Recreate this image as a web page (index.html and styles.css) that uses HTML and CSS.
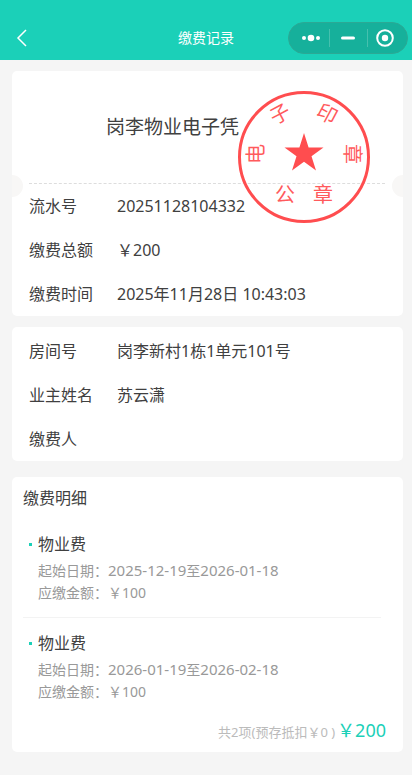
FILE: index.html
```html
<!DOCTYPE html>
<html lang="zh-CN">
<head>
    <meta charset="UTF-8">
    <meta name="viewport" content="width=device-width, initial-scale=1.0">
    <title>缴费记录</title>
    <link rel="stylesheet" href="styles.css">
</head>
<body>

<header class="navbar">
    <button class="back" type="button" aria-label="返回">
        <svg width="12" height="18" viewBox="0 0 12 18"><path d="M10 1 L2 9 L10 17" fill="none" stroke="#fff" stroke-width="1.5"/></svg>
    </button>
    <h1>缴费记录</h1>
    <div class="capsule">
        <button type="button" aria-label="更多">
            <svg width="20" height="8" viewBox="0 0 20 8" fill="#fff"><circle cx="3" cy="4" r="2"/><circle cx="10" cy="4" r="3.3"/><circle cx="17" cy="4" r="2"/></svg>
        </button>
        <button type="button" aria-label="最小化">
            <svg width="14" height="4" viewBox="0 0 14 4"><rect y="0.5" width="14" height="3" rx="1.5" fill="#fff"/></svg>
        </button>
        <button type="button" aria-label="关闭">
            <svg width="18" height="18" viewBox="0 0 18 18"><circle cx="9" cy="9" r="7.8" fill="none" stroke="#fff" stroke-width="2"/><circle cx="9" cy="9" r="3.2" fill="#fff"/></svg>
        </button>
    </div>
</header>

<main>
    <section class="card receipt">
        <h2 class="receipt-title">岗李物业电子凭</h2>
        <div class="tear"></div>
        <dl class="rows">
            <div class="row"><dt>流水号</dt><dd>20251128104332</dd></div>
            <div class="row"><dt>缴费总额</dt><dd>￥200</dd></div>
            <div class="row"><dt>缴费时间</dt><dd>2025年11月28日 10:43:03</dd></div>
        </dl>
        <!-- 电子印章 -->
        <svg class="seal" viewBox="0 0 132 132">
            <circle cx="66" cy="66" r="64.5" fill="none" stroke="#ff4d4f" stroke-width="3"/>
            <polygon points="66,42 70.6,56.4 85.5,56.4 73.5,65.2 78,79.5 66,70.8 54,79.5 58.5,65.2 46.5,56.4 61.4,56.4" fill="#ff4d4f"/>
            <text transform="translate(18 63) rotate(-90)" dy="7">电</text>
            <text transform="translate(42 23) rotate(-28)" dy="7">子</text>
            <text transform="translate(89 23) rotate(28)" dy="7">印</text>
            <text transform="translate(114 63) rotate(90)" dy="7">章</text>
            <text x="47" y="111">公</text>
            <text x="85" y="111">章</text>
        </svg>
    </section>

    <section class="card owner">
        <dl class="rows">
            <div class="row"><dt>房间号</dt><dd>岗李新村1栋1单元101号</dd></div>
            <div class="row"><dt>业主姓名</dt><dd>苏云潇</dd></div>
            <div class="row"><dt>缴费人</dt><dd></dd></div>
        </dl>
    </section>

    <section class="card detail">
        <h2>缴费明细</h2>
        <ul>
            <li>
                <h3>物业费</h3>
                <p>起始日期：<time>2025-12-19</time>至<time>2026-01-18</time></p>
                <p>应缴金额：￥100</p>
            </li>
            <li>
                <h3>物业费</h3>
                <p>起始日期：<time>2026-01-19</time>至<time>2026-02-18</time></p>
                <p>应缴金额：￥100</p>
            </li>
        </ul>
        <div class="total">
            <span class="count">共2项(预存抵扣￥0 )</span>
            <span class="sum">￥200</span>
        </div>
    </section>
</main>

</body>
</html>
```
FILE: styles.css
```css
* {
    box-sizing: border-box;
}
body {
    margin: 0;
    background-color: #f5f5f5;
    font-family: "Noto Sans", "Noto Sans CJK SC", sans-serif;
    font-size: 16px;
    font-weight: 390;
    color: #404040;
}
h1, h2, h3, p, ul, dl, dd {
    margin: 0;
    padding: 0;
    font-weight: inherit;
}
button {
    border: none;
    background: none;
    padding: 0;
    display: flex;
    align-items: center;
    justify-content: center;
    cursor: pointer;
}

/* 顶部导航 */
.navbar {
    display: grid;
    grid-template-columns: 120px 1fr 120px;
    align-items: center;
    height: 60px;
    padding: 16px 4px 0;
    background-color: #1bd0b8;
    color: #fff;
}
.navbar h1 {
    font-size: 14px;
    line-height: 20px;
    text-align: center;
}
.back {
    width: 36px;
    height: 32px;
}
.capsule {
    display: flex;
    height: 32px;
    padding: 0 3px;
    border: 1px solid #2ba995;
    border-radius: 16px;
    background-color: #16b09b;
}
.capsule button {
    flex: 1;
    position: relative;
}
.capsule button + button::before {
    content: "";
    position: absolute;
    left: 0;
    top: 6px;
    width: 1px;
    height: 18px;
    background-color: #46c0ae;
}

/* 卡片 */
.card {
    position: relative;
    margin: 11px 9px 0 12px;
    background-color: #fff;
    border-radius: 5px;
}
.receipt {
    overflow: hidden;
}
.receipt-title {
    padding-left: 94px;
    font-size: 19px;
    line-height: 112px;
}
.tear {
    margin: 0 18px 0 17px;
    border-top: 1px dashed #ddd;
}
.tear::before, .tear::after {
    content: "";
    position: absolute;
    top: 104px;
    width: 22px;
    height: 22px;
    border-radius: 50%;
    background-color: #f8f7f6;
}
.tear::before {
    left: -11px;
}
.tear::after {
    right: -11px;
}
.seal {
    position: absolute;
    top: 20px;
    right: 33px;
    width: 132px;
    height: 132px;
}
.seal text {
    font-family: "Noto Sans CJK SC", sans-serif;
    font-size: 20px;
    fill: #ff5a5c;
    text-anchor: middle;
}
.row {
    display: flex;
    padding-left: 17px;
    line-height: 44px;
}
.row dt {
    width: 88px;
}
.owner {
    padding: 2px 0 0;
}

/* 缴费明细 */
.detail {
    margin-top: 16px;
    padding-bottom: 6px;
}
.detail h2 {
    padding-left: 11px;
    font-size: 16px;
    line-height: 42px;
}
.detail ul {
    margin: 0 22px 0 11px;
    list-style: none;
}
.detail li {
    padding: 12px 0 13px 15px;
}
.detail li + li {
    border-top: 1px solid #f3f3f3;
}
.detail h3 {
    position: relative;
    margin-bottom: 3px;
    font-size: 16px;
    line-height: 26px;
}
.detail h3::before {
    content: "";
    position: absolute;
    left: -9px;
    top: 12px;
    width: 3px;
    height: 3px;
    background-color: #1bd0b8;
}
.detail p {
    font-size: 14px;
    line-height: 22px;
    color: #999;
}
.detail time {
    font-size: 15px;
    line-height: 1;
}
.total {
    display: flex;
    justify-content: flex-end;
    align-items: baseline;
    padding-right: 17px;
    line-height: 28px;
}
.count {
    margin-right: 2px;
    font-size: 13px;
    color: #bbb;
}
.sum {
    font-size: 18px;
    color: #1bd0b8;
}
```
